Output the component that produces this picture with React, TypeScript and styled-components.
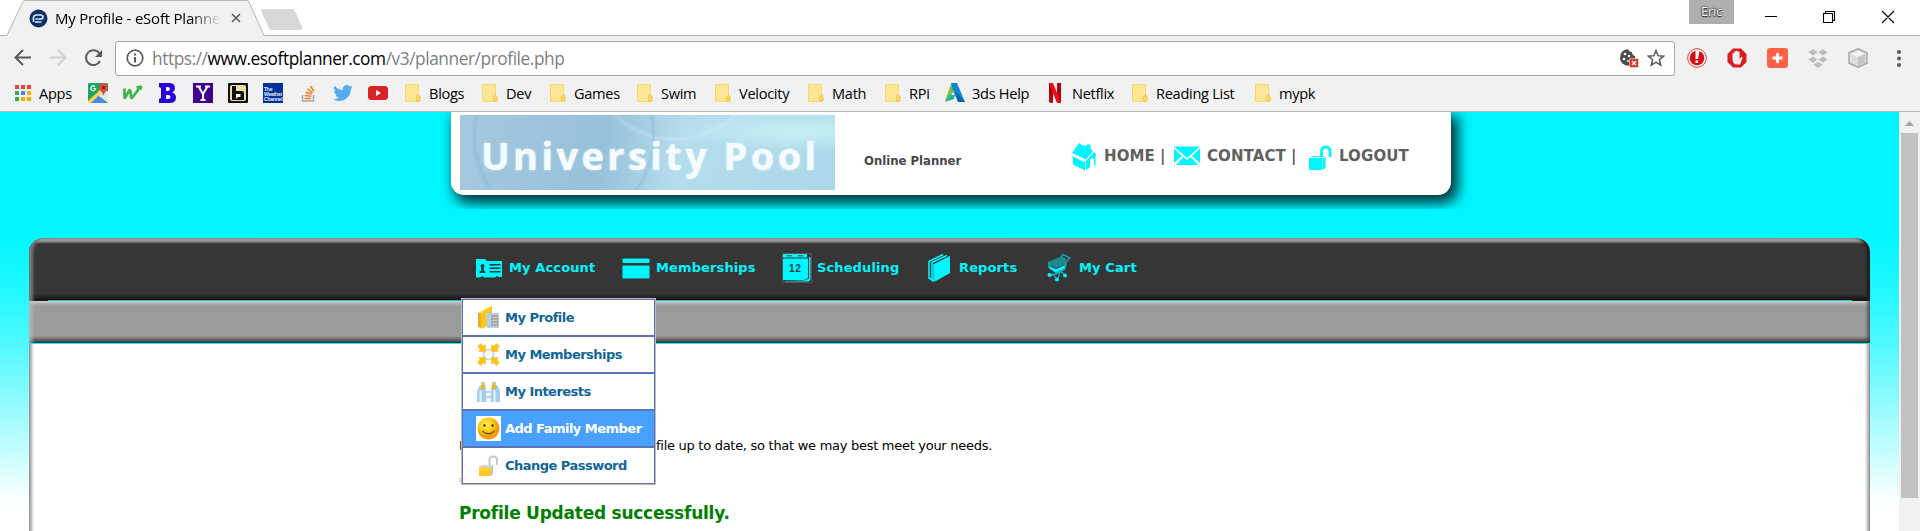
import React from 'react';
import styled, { createGlobalStyle } from 'styled-components';

const CYAN = '#00f6ff';

const Global = createGlobalStyle`
  *{box-sizing:border-box}
  body{margin:0;background:#fff;overflow:hidden}
  svg{display:block;flex:none}
`;

const Browser = styled.div`
  width:1920px;height:531px;display:flex;flex-direction:column;overflow:hidden;
  font-family:"Open Sans","Noto Sans",sans-serif;color:#000;
`;
const TitleBar = styled.div`
  height:36px;flex:none;display:flex;background:linear-gradient(#b4b4b4,#b4b4b4) 0 35px/100% 1px no-repeat #fff;
`;
const Tab = styled.div`
  position:relative;width:258px;height:36px;margin-left:7px;display:flex;align-items:center;padding-left:22px;
`;
const TabShape = styled.svg`position:absolute;left:0;top:0;`;
const TabTitle = styled.div`
  position:relative;width:167px;margin-left:7px;padding-bottom:1px;overflow:hidden;white-space:nowrap;
  font-size:15px;letter-spacing:-0.22px;line-height:22px;
  -webkit-mask-image:linear-gradient(90deg,#000 135px,transparent 166px);
  mask-image:linear-gradient(90deg,#000 135px,transparent 166px);
`;
const Layered = styled.svg`position:relative;`;
const TabClose = styled(Layered)`margin-left:9px;`;
const NewTab = styled.svg`margin:8px 0 0 -5px;`;
const WindowControls = styled.div`margin-left:auto;display:flex;`;
const User = styled.div`
  width:45px;height:24px;background:#afafaf;color:#fff;font-size:13px;line-height:22px;text-align:center;
  letter-spacing:-0.3px;text-shadow:0 0 1px #222,0 0 2px #222,0 1px 1px #333;margin-right:30px;
`;
const Toolbar = styled.div`
  height:42px;flex:none;background:#f1f1f1;display:flex;align-items:center;padding:2px 0 0 13px;
`;
const Omnibox = styled.div`
  width:1560px;height:35px;margin-left:11px;border:1px solid #a6a6a6;border-radius:3px;background:#fff;
  display:flex;align-items:center;padding:0 9px 0 10px;
`;
const Url = styled.div`
  flex:1;margin-left:8px;padding-top:1px;font-size:17.3px;letter-spacing:-0.43px;color:#808080;line-height:28px;white-space:nowrap;
  b{font-weight:400;color:#000}
`;
const Star = styled.svg`margin-left:8px;`;
const Extensions = styled.div`display:flex;align-items:center;margin-left:12px;gap:20px;`;
const MenuDots = styled.svg`margin-left:8px;`;
const Bookmarks = styled.div`
  height:34px;flex:none;background:#f1f1f1;border-bottom:1px solid #b6b6b6;display:flex;align-items:center;
  padding:0 0 4px 14px;
`;
const Bookmark = styled.div<{ $w: number; $gap?: number }>`
  width:${p => p.$w}px;flex:none;display:flex;align-items:center;gap:${p => p.$gap ?? 8}px;
  font-size:14.6px;letter-spacing:-0.3px;line-height:20px;white-space:nowrap;
`;
const Viewport = styled.div`flex:1;display:flex;min-height:0;`;
const Page = styled.div`
  width:1899px;flex:none;overflow:hidden;font-family:"DejaVu Sans",Verdana,sans-serif;
  font-variant-ligatures:none;
  background:linear-gradient(${CYAN} 0,${CYAN} 116px,#1af7ff 168px,#4bf9ff 228px,#8dfbff 288px,#c3fdff 338px,#eaffff 372px,#fbffff 386px,#fff 404px);
`;
const ShadowClip = styled.div`height:97px;overflow:hidden;padding:0 430px 0 451px;`;
const Banner = styled.header`
  width:1000px;height:83px;background:#fff;border-radius:0 0 13px 13px;display:flex;align-items:flex-start;
  padding:3px 0 0 9px;box-shadow:5px 6px 13px 2px rgba(0,35,40,.92);
`;
const Logo = styled.div`
  width:375px;height:75px;flex:none;display:flex;align-items:center;padding:5px 0 0 21px;
  font:bold 38px/50px "Open Sans",sans-serif;letter-spacing:3.4px;color:#f4fcff;white-space:nowrap;
  text-shadow:0 0 2px #e6f8ff;
  background:
    radial-gradient(circle at 104px 22px,transparent 87px,rgba(110,175,205,.3) 89px,transparent 93px),
    radial-gradient(circle at 215px -62px,transparent 83px,rgba(225,245,255,.25) 86px,transparent 90px),
    radial-gradient(ellipse at 340px 16px,rgba(200,244,246,.9),transparent 130px),
    linear-gradient(100deg,#a4c8df 0,#97c1da 38%,#b4dcec 58%,#acd8ea 100%);
`;
const Subtitle = styled.div`
  margin:37px 0 0 29px;width:207px;font:bold 13px/18px "DejaVu Sans Condensed","DejaVu Sans",sans-serif;
  letter-spacing:-0.02px;color:#484848;white-space:nowrap;
`;
const TopLinks = styled.div`
  display:flex;align-items:center;height:30px;margin-top:26px;
  font:bold 15px/20px "DejaVu Sans",sans-serif;color:#606060;white-space:nowrap;
`;
const TopLink = styled.div<{ $w: number }>`
  width:${p => p.$w}px;display:flex;align-items:center;
  span{margin-left:7px;letter-spacing:.1px}
  i{font-style:normal;margin-left:5px}
`;
const Shell = styled.div`width:1841px;margin:29px 0 0 29px;`;
const Nav = styled.nav`
  position:relative;height:63px;border-radius:14px 14px 0 0;color:${CYAN};display:flex;padding:14px 0 0 447px;
  background:
    linear-gradient(${CYAN},${CYAN}) 19px 62px/1804px 1px no-repeat,
    linear-gradient(#a3a3a3 0,#999 3px,#555 5px,#363636 6px,#363636 56px,#111 62px,#000 63px);
  box-shadow:inset 5px 0 3px -1px #777,inset -4px 0 3px -1px #1c1c1c;
`;
const NavItem = styled.div<{ $w: number; $gap: number }>`
  width:${p => p.$w}px;height:32px;display:flex;align-items:center;gap:${p => p.$gap}px;
  font-size:13px;font-weight:bold;letter-spacing:.12px;white-space:nowrap;
  span{margin-top:-2px}
`;
const SubBar = styled.div`
  height:43px;
  background:
    linear-gradient(${CYAN},${CYAN}) 0 42px/100% 1px no-repeat,
    linear-gradient(90deg,rgba(190,190,190,.8),transparent 6px),
    linear-gradient(270deg,rgba(60,60,60,.8),transparent 5px),
    linear-gradient(#d0d0d0 0,#aaa 3px,#9b9b9b 5px,#9b9b9b 35px,#707070 38px,#333 42px);
`;
const Content = styled.main`
  height:200px;padding:92px 0 0 430px;font-size:13px;
  background:linear-gradient(90deg,#8c9090 0,#b8b8b8 2px,#fff 5px,#fff 1836px,#bbb 1839px,#888 1841px);
`;
const Line = styled.div`
  height:20px;line-height:20px;display:flex;white-space:nowrap;letter-spacing:-.28px;
`;
const Lead = styled.span`width:197px;overflow:hidden;`;
const Required = styled.div`height:24px;margin-top:14px;line-height:24px;color:#f7941d;`;
const Success = styled.div`
  margin-top:7px;font-size:17px;line-height:24px;font-weight:bold;color:#008000;letter-spacing:-.24px;
`;
const Menu = styled.div`
  position:absolute;left:432px;top:60px;width:195px;border:1px solid #bcbcbc;z-index:2;
`;
const MenuItem = styled.div<{ $active?: boolean }>`
  height:37px;border:1px solid #5a72b8;display:flex;align-items:center;padding-left:13px;gap:4px;
  background:${p => (p.$active ? '#4aa0ff' : '#fff')};color:${p => (p.$active ? '#fff' : '#10659a')};
  font-size:13px;font-weight:bold;white-space:nowrap;letter-spacing:-.52px;
  span{margin-top:-1px}
`;
const Scrollbar = styled.div`width:21px;background:#f1f1f1;display:flex;flex-direction:column;align-items:center;padding-top:9px;`;
const Thumb = styled.div`width:17px;height:365px;margin-top:7px;background:#c1c1c1;`;

const Folder = () => (
  <svg width="17" height="20" viewBox="0 0 17 20"><path d="M1.500 1.500h13v12l1.500 1v3l-1 1H1.500z" fill="#ffe596" stroke="#f8d766" /><path d="M12.500 18v-4q0-1.500 2-1.500T16 15v3z" fill="#fbd864" stroke="#edc24a" strokeWidth=".8" /></svg>
);
const Apps = () => (
  <svg width="18" height="18" viewBox="0 0 18 18">
    {['#ea4335', '#ea4335', '#ea4335', '#34a853', '#4285f4', '#fbab00', '#34a853', '#fbab00', '#fbab00'].map((c, i) => (
      <rect key={i} x={1 + (i % 3) * 6} y={1 + Math.floor(i / 3) * 6} width="4" height="4" fill={c} />
    ))}
  </svg>
);
const Maps = () => (
  <svg width="20" height="20" viewBox="0 0 20 20">
    <rect width="20" height="20" rx="1" fill="#1fa463" /><path d="M0 18 13 6l4 3L6 20H0z" fill="#ffd54b" /><path d="M3 20l7.500-7.500L18 20z" fill="#4a89f3" /><path d="M10.500 12.500 20 20V8h-5z" fill="#e5e5e5" />
    <path d="M15.500 0a4.300 4.300 0 0 0-4.300 4.500c0 3 3.500 4 4.300 8.500.8-4.500 4.500-5.500 4.500-8.500A4.400 4.400 0 0 0 15.500 0z" fill="#dd4b3e" /><circle cx="15.600" cy="4.500" r="1.600" fill="#812018" />
    <path d="M7 3.600a2.400 2.400 0 1 0 .6 1.900H5.300" fill="none" stroke="#fff" strokeWidth="1.200" />
  </svg>
);
const GreenW = () => (
  <svg width="21" height="18" viewBox="0 0 21 18"><path d="M2.500 4.500v10l5.500-9 1.500 9L18 3.500M14.500 3.500l4.500-1-.5 3" fill="none" stroke="#41b649" strokeWidth="2.800" strokeLinejoin="bevel" /></svg>
);
const BlueB = () => (
  <svg width="17" height="20" viewBox="0 0 17 20"><path fillRule="evenodd" d="M0 0h10q6 0 6 5 0 3-3 4.500 4 1 4 5 0 5.500-7 5.500H0v-4l2-1V5L0 4zM7 4v4h2q2 0 2-2T9 4zM7 12v4h2.500q2 0 2-2t-2-2z" fill="#2b00d8" /></svg>
);
const PurpleY = () => (
  <svg width="20" height="20" viewBox="0 0 20 20"><rect width="20" height="20" fill="#400090" /><path d="M3 3.500h5M12 3.500h5M5.500 3.500 10 11l4.500-7.500M10 11v6M7.500 17h5" fill="none" stroke="#fff" strokeWidth="2" /></svg>
);
const BlackB = () => (
  <svg width="20" height="20" viewBox="0 0 20 20"><rect width="20" height="20" rx="1" fill="#111" /><rect x="2" y="2" width="16" height="16" rx="2" fill="#e9dfaa" /><path d="M4 3h4v5h6q2 0 2 2v7H4z" fill="#111" /><path d="M8 11h4.500v3H10l-2 2z" fill="#fff" /></svg>
);
const WeatherText = styled.div`
  width:20px;height:20px;background:#003399;color:#e6ecff;font:bold 5px/5px "Liberation Sans",sans-serif;padding:4px 0 0 1px;letter-spacing:-.2px;overflow:hidden;
`;
const Stack = () => (
  <svg width="16" height="18" viewBox="0 0 16 18"><path d="M1.500 11v6h11v-6" fill="none" stroke="#a6a8ab" strokeWidth="1.500" /><path d="M3.500 14.500H10M3.700 11.500l6.500.8M4.600 8.200l6 2M6.500 4.800l5 4M9.500 2l3.500 5.500" stroke="#f48024" strokeWidth="1.600" /></svg>
);
const Twitter = () => (
  <svg width="20" height="18" viewBox="0 1 24 22"><path fill="#55acee" d="M24 4.600a10 10 0 0 1-2.800.8 5 5 0 0 0 2.100-2.700 10 10 0 0 1-3.100 1.200 4.900 4.900 0 0 0-8.400 4.500A14 14 0 0 1 1.700 3.200a4.900 4.900 0 0 0 1.500 6.500 4.900 4.900 0 0 1-2.200-.6 4.900 4.900 0 0 0 4 4.900 5 5 0 0 1-2.300.1 4.900 4.900 0 0 0 4.600 3.400A9.900 9.900 0 0 1 0 19.500a14 14 0 0 0 21.500-12.400A10 10 0 0 0 24 4.600z" /></svg>
);
const Youtube = () => (
  <svg width="20" height="14" viewBox="0 0 20 14"><rect width="20" height="14" rx="3.500" fill="#d92128" /><path d="M8 4l5 3-5 3z" fill="#fff" /></svg>
);
const Autodesk = () => (
  <svg width="20" height="20" viewBox="0 0 20 20"><path d="M6 1L0 18l4-1 6-12z" fill="#7bbf4a" /><path d="M5 12l-5 7 9-3 1-4z" fill="#29b09d" /><path d="M6 0h6l8 19h-7L8 8z" fill="#1386cf" /><path d="M11 9l2 10h7z" fill="#0a62b0" /></svg>
);
const Netflix = () => (
  <svg width="12" height="20" viewBox="0 0 12 20"><path d="M0 0h4v20l-4-.5zM8 0h4v20l-4-.5z" fill="#b1060f" /><path d="M0 0h4l8 20H8z" fill="#f20a18" /></svg>
);

const House = () => (
  <svg width="26" height="29" viewBox="0 0 26 29" fill={CYAN}><path d="M1 11 7 2.500 8.500 1l2 2L15 4l2-2 2.500 1v3.500L22 9l-7 8.500z" /><path d="M.5 13.500 12 19.500h2V28.500L2 22.500v-7z" /><path d="M14.500 19.500 23 10l2.500 3-1 1v9l-1.500 1v-7q-2-2.500-4 1v7L15 28z" /></svg>
);
const Mail = () => (
  <svg width="26" height="20" viewBox="0 0 26 20" fill={CYAN}><path d="M0 .5h26L13 12zM0 2.500l8 7.500L0 17zM26 2.500V17l-8-7zM9.500 11l3.500 3 3.500-3 7.500 8H2z" /></svg>
);
const Unlock = () => (
  <svg width="23" height="27" viewBox="0 0 23 27"><path d="M12.500 14V7a4.500 4.500 0 0 1 8.500 0v7" fill="none" stroke={CYAN} strokeWidth="2.800" /><path d="M0 15h13v12H0zM13.500 15l3-1v11l-3 2zM1 14l3-1h12l-2 1z" fill={CYAN} /></svg>
);
const AccountIcon = () => (
  <svg width="26" height="20" viewBox="0 0 26 20"><path d="M0 1h9l2 2h15v16h-3l-2-1-2 1.500H8L6 18l-2 1.500H0z" fill={CYAN} /><circle cx="6.500" cy="8" r="2" fill="#173c40" /><path d="M5.200 9.500h2.600v3l1.500 1v1.500H3.500v-1.500l1.700-1zM13.500 6h11v1.500h-11zM13.500 9.500h11V11h-11zM13.500 13h11v1.500h-11z" fill="#173c40" /></svg>
);
const CardIcon = () => (
  <svg width="28" height="21" viewBox="0 0 28 21" fill={CYAN}><rect x=".5" y=".5" width="27" height="4.500" rx="1" /><rect x=".5" y="7.500" width="27" height="13" rx="1" /></svg>
);
const CalendarIcon = () => (
  <svg width="30" height="30" viewBox="0 0 30 30"><path d="M.5.500h29v29H.5z" fill="#363636" stroke="#555" /><path d="M1 1h24v3.500H1zM1 5.500h25V25l-4 2H1zM27 4h1.500v23l-2 1.500H3V28l19-.4 5-2z" fill={CYAN} /><path d="M5 2h5v1.500H5zM16 2h5v1.500h-5z" fill="#2b7275" /><text x="7" y="19" fontSize="10" fontWeight="bold" fontFamily="Liberation Sans, sans-serif" fill="#263c3d" textLength="12">12</text></svg>
);
const ReportsIcon = () => (
  <svg width="24" height="30" viewBox="0 0 24 30"><path d="M7 11 23 3v17L8 28.500z" fill={CYAN} /><path d="M5 27V9.500L20 2.500M2 25V8.500L16 1.500M7 11v17M1.500 24.500 7 28.500" fill="none" stroke={CYAN} strokeWidth="1.600" /></svg>
);
const CartIcon = () => (
  <svg width="24" height="30" viewBox="0 0 24 30"><path d="M2 8.500 15 3l4 3-1 6-9 3-7-3z" fill="#188a90" /><path d="M2 8.500v6l8 3.500 9-6" fill="none" stroke="#14b5bc" strokeWidth="1.300" /><path d="M2 13l7 3 10-4-1.500 4.500L9 20l-6-4z" fill={CYAN} /><path d="M14 4l2-2.500 7 3.500-3.500 3-1.500 8-8 4M3 22.500l12-3.500 3 3.500M5 20.500l5.500 6 2.500-7" fill="none" stroke="#17a7ad" strokeWidth="1.400" /><g fill={CYAN}><circle cx="2.500" cy="22" r="2" /><circle cx="18" cy="22.500" r="2" /><circle cx="10" cy="26.500" r="2" /></g></svg>
);

const ProfileIcon = () => (
  <svg width="25" height="25" viewBox="0 0 25 25"><path d="M2 8l3-1v16l-3-1z" fill="#f0a63c" /><path d="M5 7 16 1v18L5 24z" fill="#fbc912" /><path d="M2 8 14 1h2L5 8z" fill="#ffdf62" /><path d="M10 8h13v15H11z" fill="#b3cff5" /><g fill="#b69b72">{[0, 1, 2, 3].map(y => [0, 1, 2].map(x => <rect key={`${x}${y}`} x={15 + x * 2.6} y={10 + y * 3} width="2" height="2" />))}</g></svg>
);
const ArrowsIcon = () => (
  <svg width="25" height="25" viewBox="0 0 25 25"><circle cx="12.500" cy="12.500" r="5" fill="none" stroke="#bfd3ea" strokeWidth="1.500" />{[0, 90, 180, 270].map(a => <path key={a} transform={`rotate(${a} 12.500 12.500)`} d="M1.500 4.500l3-3 2.500 2.500 2.500-1v6.500H3l1-2.500z" fill="#fcc714" stroke="#f6b51b" strokeWidth=".5" />)}</svg>
);
const BinocularsIcon = () => (
  <svg width="25" height="25" viewBox="0 0 25 25"><path d="M4 6h5.500l1 17H1V12zM15.500 6H21l3 6v11h-9.500z" fill="#a3cdec" /><path d="M4.500 11v12M18.500 11v12" stroke="#e2f2fb" strokeWidth="2" /><path d="M10 13h5M10 18h5" stroke="#9fc4e4" strokeWidth="1.500" /><path d="M5 3h4v4H5zM16 3h4v4h-4z" fill="#bcd0a0" /><circle cx="7" cy="8" r="2.200" fill="#f7b314" /><circle cx="18" cy="8" r="2.200" fill="#f7b314" /></svg>
);
const SmileIcon = () => (
  <svg width="25" height="25" viewBox="0 0 25 25"><defs><radialGradient id="smile" cx=".4" cy=".35"><stop offset="0" stopColor="#fff05a" /><stop offset=".65" stopColor="#fbcb13" /><stop offset="1" stopColor="#f19d12" /></radialGradient></defs><rect width="25" height="25" fill="#fff" /><circle cx="12.500" cy="12.500" r="11" fill="url(#smile)" /><circle cx="8.500" cy="9.500" r="1.400" fill="#6d5520" /><circle cx="16.500" cy="9.500" r="1.400" fill="#6d5520" /><path d="M6.500 15q6 5.500 12 0" fill="none" stroke="#6d5520" strokeWidth="1.300" /></svg>
);
const PasswordIcon = () => (
  <svg width="25" height="25" viewBox="0 0 25 25"><path d="M13.500 12V6a4 4 0 0 1 7.500 0v6" fill="none" stroke="#c3cad6" strokeWidth="2" /><path d="M3 14l3-2h11l-2 2z" fill="#cbd8ec" /><path d="M3 14h12v9H3z" fill="#fbd433" /><path d="M3 18h12v5H3z" fill="#f5b91c" opacity=".5" /><path d="M15 14l2-2v9l-2 2z" fill="#b4c0d8" /></svg>
);

const bookmarks: { w: number; icon: React.ReactNode; label?: string; gap?: number }[] = [
  { w: 74, icon: <Apps />, label: 'Apps', gap: 7 },
  { w: 34, icon: <Maps /> }, { w: 37, icon: <GreenW /> }, { w: 34, icon: <BlueB /> }, { w: 35, icon: <PurpleY /> },
  { w: 35, icon: <BlackB /> }, { w: 38, icon: <WeatherText>The<br />Weather<br />Channel</WeatherText> }, { w: 32, icon: <Stack /> },
  { w: 35, icon: <Twitter /> }, { w: 36, icon: <Youtube /> },
  { w: 77, icon: <Folder />, label: 'Blogs' }, { w: 68, icon: <Folder />, label: 'Dev' }, { w: 87, icon: <Folder />, label: 'Games' },
  { w: 78, icon: <Folder />, label: 'Swim' }, { w: 93, icon: <Folder />, label: 'Velocity' }, { w: 77, icon: <Folder />, label: 'Math' },
  { w: 61, icon: <Folder />, label: 'RPi' }, { w: 104, icon: <Autodesk />, label: '3ds Help', gap: 7 },
  { w: 82, icon: <Netflix />, label: 'Netflix', gap: 11 }, { w: 123, icon: <Folder />, label: 'Reading List' }, { w: 70, icon: <Folder />, label: 'mypk' },
];

export default function App() {
  return (
    <Browser>
      <Global />
      <TitleBar>
        <Tab>
          <TabShape width="258" height="36"><path d="M0 35.500 L16 1.500 Q17 .5 19 .5 H239 Q241 .5 242 2 L257 35.500 V36 H0z" fill="#f1f1f1" /><path d="M0 35.500 L16 1.500 Q17 .5 19 .5 H239 Q241 .5 242 2 L257 35.500" fill="none" stroke="#b4b4b4" /></TabShape>
          <Layered width="19" height="19" viewBox="0 0 19 19"><circle cx="9.500" cy="9.500" r="9" fill="#0b2f66" /><path d="M4.500 13V9q0-3 3-3h4q2.500 0 2.500 2t-2.500 2H6.500M6 13h6.500" fill="none" stroke="#dce6f3" strokeWidth="1.700" /></Layered>
          <TabTitle>My Profile - eSoft Planne</TabTitle>
          <TabClose width="10" height="10"><path d="M1 1l8 8M9 1l-8 8" stroke="#555" strokeWidth="1.500" /></TabClose>
        </Tab>
        <NewTab width="44" height="23"><path d="M1 3Q1 1 3 1h29q2 0 3 2l7 16q1 3-2 3H12q-2 0-3-2z" fill="#d7d7d7" /></NewTab>
        <WindowControls>
          <User>Eric</User>
          <svg width="156" height="35" viewBox="1764 0 156 35" fill="none" stroke="#000"><path d="M1765 16.500h12M1823.500 13.500h9v9h-9zM1825.500 13v-1.500h9v9H1833M1882 11l12 12M1894 11l-12 12" strokeWidth="1.100" /></svg>
        </WindowControls>
      </TitleBar>
      <Toolbar>
        <svg width="91" height="24" viewBox="13 47 91 24" fill="none" strokeWidth="2"><path d="M31 58.500H16M23 51l-7.500 7.500L23 66" stroke="#5a5a5a" /><path d="M50 58.500h15M58 51l7.500 7.500L58 66" stroke="#d0d0d0" /><path d="M99.500 54.500A7.400 7.400 0 1 0 100 62" stroke="#5a5a5a" /><path d="M102 51v7h-7z" fill="#5a5a5a" /></svg>
        <Omnibox>
          <svg width="18" height="18" viewBox="0 0 18 18"><circle cx="9" cy="9" r="7.800" fill="none" stroke="#5a5a5a" strokeWidth="1.700" /><path d="M8 4.500h2v2H8zM8 8h2v5.500H8z" fill="#5a5a5a" /></svg>
          <Url>https://<b>www.esoftplanner.com</b>/v3/planner/profile.php</Url>
          <svg width="19" height="19" viewBox="0 0 19 19"><path d="M8 0q1 3 4 3 0 3 3 4 1 5-2 8-4 3-8 1-5-2-5-7 0-8 8-9z" fill="#4e4e4e" /><g fill="#fff"><circle cx="5" cy="5" r="1.300" /><circle cx="9" cy="7" r="1.200" /><circle cx="4" cy="10" r="1.300" /><circle cx="8" cy="12" r="1" /></g><rect x="9.500" y="9.500" width="9" height="9" rx="1" fill="#d8392f" stroke="#fff" strokeWidth=".5" /><path d="M12 12l4 4M16 12l-4 4" stroke="#fff" strokeWidth="1.300" /></svg>
          <Star width="18" height="18" viewBox="0 0 18 18"><path d="M9 1.500l2.100 5.200 5.600.4-4.300 3.600 1.400 5.500L9 13.200l-4.800 3 1.400-5.500L1.300 7.100l5.600-.4z" fill="none" stroke="#5a5a5a" strokeWidth="1.500" /></Star>
        </Omnibox>
        <Extensions>
          <svg width="20" height="20" viewBox="0 0 20 20"><circle cx="10" cy="10" r="9.300" fill="#fff" stroke="#d33" /><circle cx="10" cy="10" r="7.300" fill="#d70d14" /><path d="M8.500 3h4l-1.500 8H8.500zM8.500 12.500h2.600v2.600H8.500z" fill="#fff" /></svg>
          <svg width="20" height="20" viewBox="0 0 20 20"><path d="M6 .5h8L19.500 6v8L14 19.500H6L.5 14V6z" fill="#db1b20" /><path d="M5.500 12V5.500q.8-1 1.700 0V9 3.500q.9-1 1.800 0V9 3q.9-1 1.800 0v6-5q.9-1 1.800 0v7l1.600-2q1.500-.5 1.400 1L13 16.500H8.500q-2.500-1-3-4.500z" fill="#f4eeee" /></svg>
          <svg width="21" height="20" viewBox="0 0 21 20"><rect width="21" height="20" rx="3" fill="#ff6347" /><path d="M10.500 5v10M5.500 10h10" stroke="#fff" strokeWidth="2.800" /></svg>
          <svg width="20" height="19" viewBox="0 0 20 19" fill="#bdbdbd"><path d="M5 0l4.700 3.200L5 6.400.3 3.200zM15 0l4.700 3.200L15 6.400l-4.700-3.200zM5 7.400l4.700 3.200L5 13.800.3 10.600zM15 7.400l4.700 3.200-4.700 3.200-4.700-3.200zM10 12.700l4.700 3.100L10 19l-4.700-3.200z" /></svg>
          <svg width="20" height="20" viewBox="0 0 20 20"><path d="M10 .8l9 4v10.500l-9 4-9-4V4.800z" fill="#dcdcdc" stroke="#a8a8a8" strokeWidth="1.500" /><path d="M3 6l7-3 7 3-7 3z" fill="#f4f4f4" /><path d="M10 9v9l7-3.500V6z" fill="#c4c4c4" /></svg>
          <MenuDots width="6" height="20" viewBox="0 0 6 20" fill="#5a5a5a"><circle cx="3" cy="4" r="2" /><circle cx="3" cy="10.500" r="2" /><circle cx="3" cy="17" r="2" /></MenuDots>
        </Extensions>
      </Toolbar>
      <Bookmarks>
        {bookmarks.map((b, i) => <Bookmark key={i} $w={b.w} $gap={b.gap}>{b.icon}{b.label && <span>{b.label}</span>}</Bookmark>)}
      </Bookmarks>
      <Viewport>
        <Page>
          <ShadowClip>
            <Banner>
              <Logo>University Pool</Logo>
              <Subtitle>Online Planner</Subtitle>
              <TopLinks>
                <TopLink $w={103}><House /><span>HOME</span><i>|</i></TopLink>
                <TopLink $w={135}><Mail /><span>CONTACT</span><i>|</i></TopLink>
                <TopLink $w={110}><Unlock /><span>LOGOUT</span></TopLink>
              </TopLinks>
            </Banner>
          </ShadowClip>
          <Shell>
            <Nav>
              <NavItem $w={146} $gap={7}><AccountIcon /><span>My Account</span></NavItem>
              <NavItem $w={160} $gap={6}><CardIcon /><span>Memberships</span></NavItem>
              <NavItem $w={145} $gap={5}><CalendarIcon /><span>Scheduling</span></NavItem>
              <NavItem $w={120} $gap={8}><ReportsIcon /><span>Reports</span></NavItem>
              <NavItem $w={110} $gap={8}><CartIcon /><span>My Cart</span></NavItem>
              <Menu>
                <MenuItem><ProfileIcon /><span>My Profile</span></MenuItem>
                <MenuItem><ArrowsIcon /><span>My Memberships</span></MenuItem>
                <MenuItem><BinocularsIcon /><span>My Interests</span></MenuItem>
                <MenuItem $active><SmileIcon /><span>Add Family Member</span></MenuItem>
                <MenuItem><PasswordIcon /><span>Change Password</span></MenuItem>
              </Menu>
            </Nav>
            <SubBar />
            <Content>
              <Line><Lead>Please keep your pro</Lead><span>file up to date, so that we may best meet your needs.</span></Line>
              <Required>*</Required>
              <Success>Profile Updated successfully.</Success>
            </Content>
          </Shell>
        </Page>
        <Scrollbar>
          <svg width="9" height="5"><path d="M0 5l4.500-5L9 5z" fill="#a3a3a3" /></svg>
          <Thumb />
        </Scrollbar>
      </Viewport>
    </Browser>
  );
}
